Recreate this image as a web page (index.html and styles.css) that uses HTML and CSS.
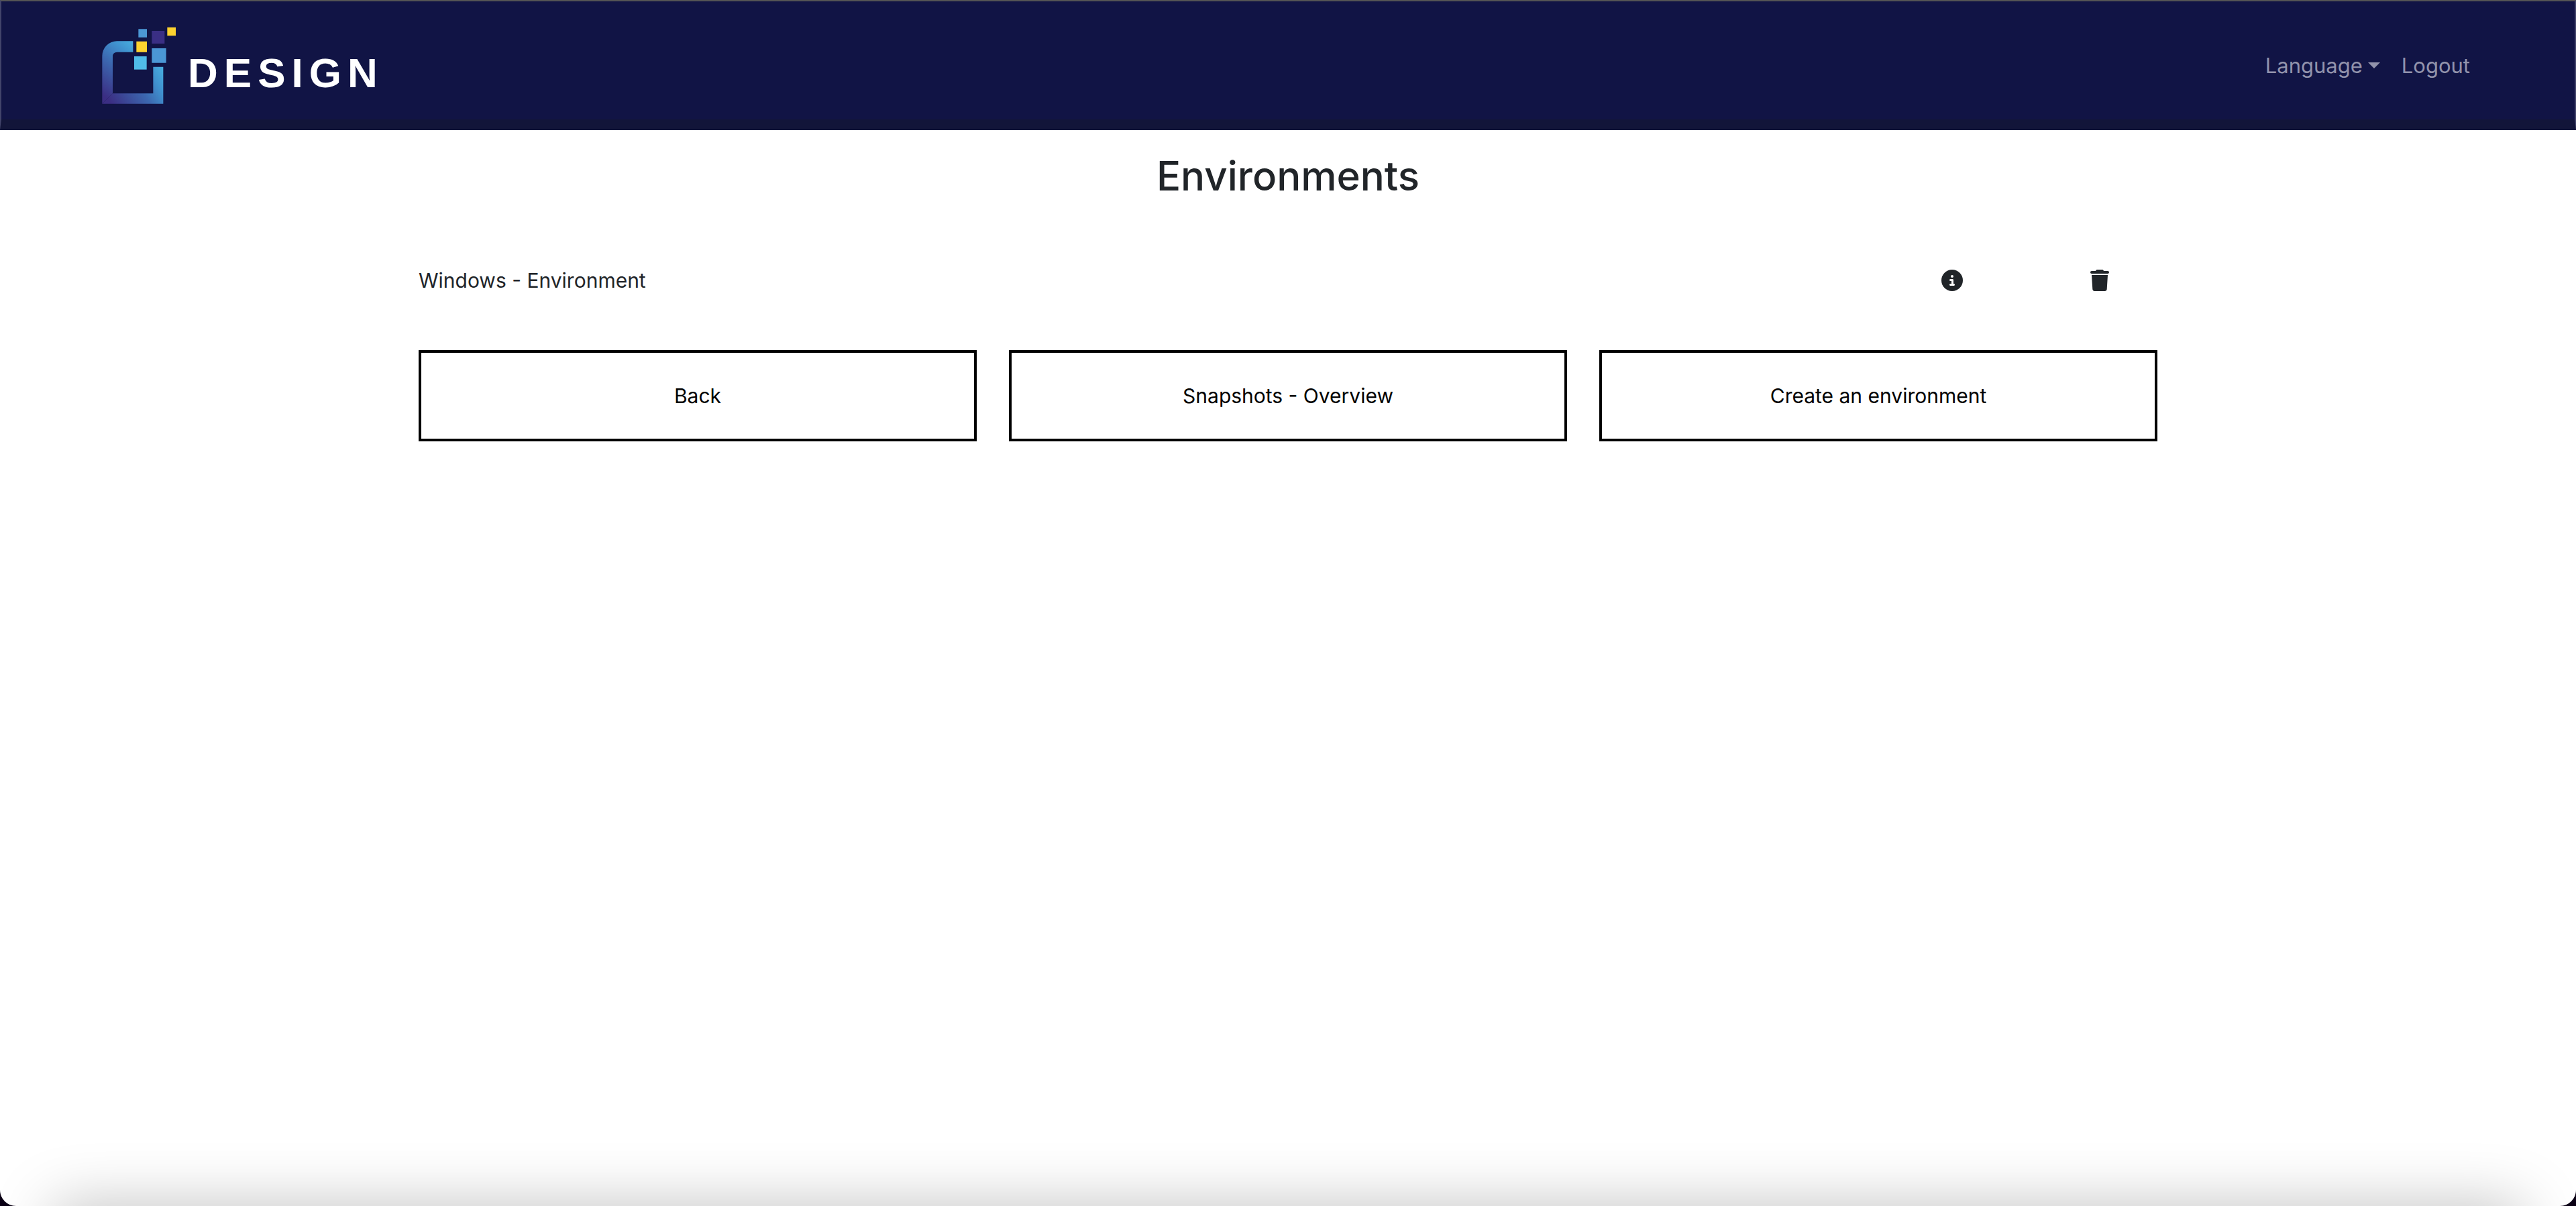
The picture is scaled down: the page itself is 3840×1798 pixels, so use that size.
FILE: index.html
```html
<!DOCTYPE html>
<html lang="en">
<head>
<meta charset="utf-8">
<title>Environments</title>
<link rel="stylesheet" href="styles.css">
</head>
<body>
<div class="window">
  <header class="navbar">
    <a class="brand" href="#" aria-label="Design home">
      <svg class="brand-mark" viewBox="65 61 333 345" aria-hidden="true">
        <defs>
          <linearGradient id="frame" gradientUnits="userSpaceOnUse" x1="95" y1="385" x2="260" y2="170">
            <stop offset="0" stop-color="#3b2e83"/>
            <stop offset="0.5" stop-color="#3c68b0"/>
            <stop offset="0.8" stop-color="#4092cf"/>
            <stop offset="1" stop-color="#48aee0"/>
          </linearGradient>
          <linearGradient id="side" gradientUnits="userSpaceOnUse" x1="95" y1="385" x2="340" y2="250">
            <stop offset="0" stop-color="#3b2e83"/>
            <stop offset="0.55" stop-color="#3c68b0"/>
            <stop offset="0.8" stop-color="#4092cf"/>
            <stop offset="1" stop-color="#48aee0"/>
          </linearGradient>
        </defs>
        <path fill="url(#frame)" d="M66 405V191a66 66 0 0 1 66-66h72v49h-71q-20 0-20 20v165z"/>
        <path fill="url(#side)" d="M66 405L113 359H294V240h45v165z"/>
        <path fill="#4b97d5" d="M228 71h38v37h-38zM288 157h64v65h-64z"/>
        <path fill="#3a2f84" d="M288 79h57v57h-57z"/>
        <path fill="#fdd32f" d="M357 63h38v38h-38zM219 126h47v48h-47z"/>
        <path fill="#50bce9" d="M209 193h56v59h-56z"/>
      </svg>
      <span class="brand-name">DESIGN</span>
    </a>
    <nav class="nav">
      <a class="nav-link dropdown" href="#">Language</a>
      <a class="nav-link" href="#">Logout</a>
    </nav>
  </header>
  <main class="container">
    <h1 class="title">Environments</h1>
    <div class="row">
      <span class="row-name">Windows - Environment</span>
      <button class="icon-button" type="button" aria-label="Details">
        <svg class="icon" viewBox="0 0 512 512" aria-hidden="true"><path d="M256 512A256 256 0 1 0 256 0a256 256 0 1 0 0 512zM216 336h24V272H216c-13.3 0-24-10.7-24-24s10.7-24 24-24h48c13.3 0 24 10.7 24 24v88h8c13.3 0 24 10.7 24 24s-10.7 24-24 24H216c-13.3 0-24-10.7-24-24s10.7-24 24-24zm40-208a32 32 0 1 1 0 64 32 32 0 1 1 0-64z"/></svg>
      </button>
      <button class="icon-button" type="button" aria-label="Delete">
        <svg class="icon" viewBox="0 0 448 512" aria-hidden="true"><path d="M135.2 17.7L128 32H32C14.3 32 0 46.3 0 64S14.3 96 32 96H416c17.7 0 32-14.3 32-32s-14.3-32-32-32H320l-7.2-14.3C307.4 6.8 296.3 0 284.2 0H163.8c-12.1 0-23.2 6.8-28.6 17.7zM416 128H32L53.2 467c1.6 25.3 22.6 45 47.9 45H346.9c25.3 0 46.3-19.7 47.9-45L416 128z"/></svg>
      </button>
    </div>
    <div class="actions">
      <button class="action" type="button">Back</button>
      <button class="action" type="button">Snapshots - Overview</button>
      <button class="action" type="button">Create an environment</button>
    </div>
  </main>
  <div class="window-shade"></div>
</div>
</body>
</html>
```
FILE: styles.css
```css
* {
  box-sizing: border-box;
}

html {
  background: #0a0014;
}

body {
  margin: 0;
  font-family: Inter, "Liberation Sans", sans-serif;
  font-size: 30px;
  line-height: 48px;
  color: #212529;
}

.window {
  position: relative;
  min-height: 100vh;
  overflow: hidden;
  background: #fff;
  border-radius: 0 0 24px 24px;
}

.navbar {
  display: flex;
  align-items: center;
  justify-content: space-between;
  padding: 38px 156px 23px 150px;
  background: #111445;
  border: 2px solid #42446a;
  border-top-color: #555;
  border-bottom: 16px solid #121539;
}

.brand {
  display: flex;
  align-items: center;
  gap: 17px;
  color: #fff;
  text-decoration: none;
}

.brand-mark {
  width: 111px;
  height: 115px;
}

.brand-name {
  padding-top: 22px;
  font: bold 62px/72px "Liberation Sans", Arial, sans-serif;
  letter-spacing: 9px;
}

.nav {
  display: flex;
  gap: 32px;
  font-size: 31px;
}

.nav-link {
  color: #9293ac;
  text-decoration: none;
}

.dropdown {
  display: flex;
  align-items: center;
  gap: 8px;
}

.dropdown::after {
  content: "";
  border: 9px solid transparent;
  border-top-color: currentColor;
  border-bottom: 0;
}

.container {
  width: 100%;
  max-width: 2640px;
  margin: 0 auto;
  padding: 32px 24px;
}

.title {
  margin: 0 0 96px;
  font-size: 60px;
  font-weight: 500;
  line-height: 72px;
  text-align: center;
}

.row {
  display: flex;
  align-items: center;
  margin: 0 -24px 80px;
  padding-left: 24px;
}

.row-name {
  flex: 1;
}

.icon-button {
  display: flex;
  justify-content: center;
  width: 220px;
  padding: 0;
  color: inherit;
  background: none;
  border: 0;
}

.icon {
  height: 32px;
  fill: currentColor;
}

.actions {
  display: grid;
  grid-template-columns: repeat(3, 1fr);
  gap: 48px;
}

.action {
  padding: 40px;
  font: inherit;
  color: #000;
  background: #fff;
  border: 4px solid #000;
}

.window-shade {
  position: absolute;
  top: 100%;
  right: 80px;
  left: 80px;
  height: 80px;
  box-shadow: 0 0 90px rgba(0, 0, 0, 0.26);
}
```
